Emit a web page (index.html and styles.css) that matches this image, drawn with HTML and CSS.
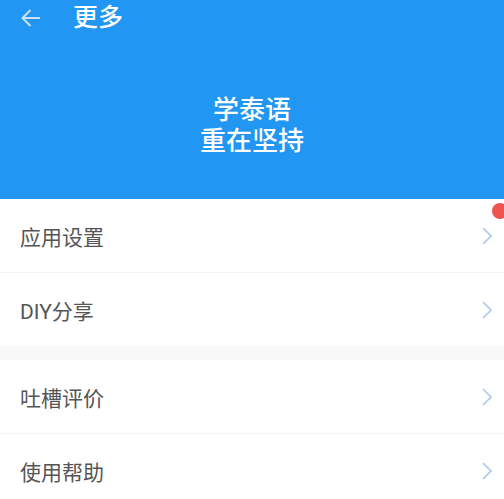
FILE: index.html
```html
<!DOCTYPE html>
<html lang="zh-CN">
<head>
  <meta charset="UTF-8" />
  <meta name="viewport" content="width=device-width, initial-scale=1.0"/>
  <title>更多</title>
  <link rel="stylesheet" href="styles.css">
</head>
<body>

<header class="hero">
  <div class="topbar">
    <svg class="back" width="21" height="20" viewBox="0 0 21 20">
      <path d="M20 10H2.5M10.5 2L2.5 10l8 8" fill="none" stroke="currentColor" stroke-width="2"/>
    </svg>
    <span class="title">更多</span>
  </div>
  <div class="slogan">学泰语<br>重在坚持</div>
</header>

<ul class="group">
  <li class="row">
    <span>应用设置</span>
    <svg class="chev" width="10" height="18" viewBox="0 0 10 18"><path d="M1 1l8 8-8 8" fill="none" stroke="currentColor" stroke-width="1.6"/></svg>
    <i class="dot"></i>
  </li>
  <li class="row">
    <span>DIY分享</span>
    <svg class="chev" width="10" height="18" viewBox="0 0 10 18"><path d="M1 1l8 8-8 8" fill="none" stroke="currentColor" stroke-width="1.6"/></svg>
  </li>
</ul>

<div class="gap"></div>

<ul class="group">
  <li class="row">
    <span>吐槽评价</span>
    <svg class="chev" width="10" height="18" viewBox="0 0 10 18"><path d="M1 1l8 8-8 8" fill="none" stroke="currentColor" stroke-width="1.6"/></svg>
  </li>
  <li class="row">
    <span>使用帮助</span>
    <svg class="chev" width="10" height="18" viewBox="0 0 10 18"><path d="M1 1l8 8-8 8" fill="none" stroke="currentColor" stroke-width="1.6"/></svg>
  </li>
</ul>

</body>
</html>
```

FILE: styles.css
```css
body{
  margin:0;background:#fff;overflow:hidden;
  font-family:Roboto, "Noto Sans CJK SC", sans-serif;
}
.hero{
  background:#2196f3;height:199px;color:#fff;
}
.topbar{
  display:flex;align-items:center;height:36px;padding-left:20px;
}
.back{color:#c8e2fb;}
.title{font-size:25px;margin-left:32px;line-height:36px;font-weight:500;}
.slogan{
  text-align:center;font-size:26px;line-height:31px;padding-top:59px;font-weight:500;
}
.group{list-style:none;margin:0;padding:0;}
.row{
  position:relative;
  display:flex;align-items:center;justify-content:space-between;
  height:73px;padding:0 12px 0 20px;
  font-size:21px;color:#555;
}
.row + .row{border-top:1px solid #f3f3f3;}
.chev{color:#a9caee;}
.gap{height:14px;background:#f8f8f8;}
.dot{
  position:absolute;right:-4px;top:4px;
  width:16px;height:16px;border-radius:50%;background:#ef5350;
}
```
